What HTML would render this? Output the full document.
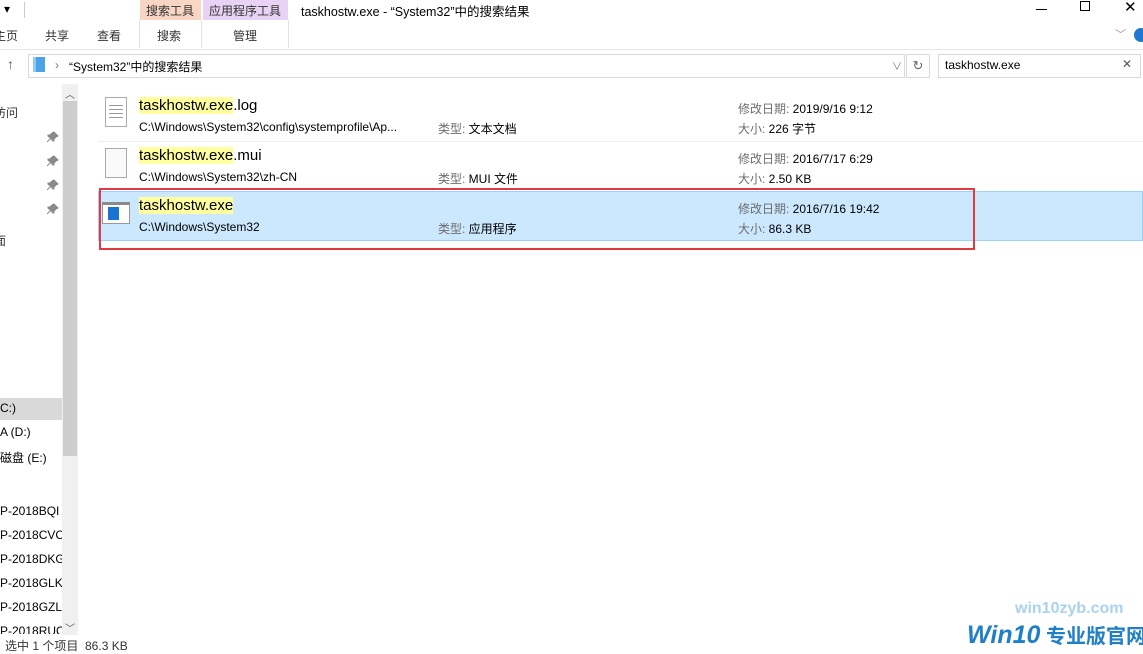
<!DOCTYPE html>
<html><head><meta charset="utf-8"><style>
*{margin:0;padding:0;box-sizing:border-box}
body{width:1143px;height:650px;background:#fff;font-family:"Liberation Sans","Noto Sans CJK SC",sans-serif;font-size:12px;color:#000;position:relative;overflow:hidden}
.a{position:absolute;white-space:nowrap}
.hl{background:#ffff9f;}
.g{color:#6d6d6d}
.pin{position:absolute;left:47px;width:12px;height:12px}
</style></head><body>
<!-- title bar -->
<div class="a" style="left:4px;top:2px;font-size:12px">▾</div>
<div class="a" style="left:24px;top:2px;width:1px;height:16px;background:#ccc"></div>
<div class="a" style="left:140px;top:0;width:61px;height:20px;background:#f9d6c3"></div>
<div class="a" style="left:146px;top:2px;color:#333">搜索工具</div>
<div class="a" style="left:203px;top:0;width:85px;height:20px;background:#e9d3f5"></div>
<div class="a" style="left:209px;top:2px;color:#333">应用程序工具</div>
<div class="a" style="left:301px;top:1px;font-size:12.5px">taskhostw.exe - “System32”中的搜索结果</div>
<div class="a" style="left:1036px;top:9px;width:11px;height:1px;background:#000"></div>
<div class="a" style="left:1080px;top:1px;width:10px;height:10px;border:1px solid #000"></div>
<div class="a" style="left:1124px;top:-2px;font-size:15px">✕</div>
<!-- tabs -->
<div class="a" style="left:-6px;top:27px;color:#333">主页</div>
<div class="a" style="left:45px;top:27px;color:#333">共享</div>
<div class="a" style="left:97px;top:27px;color:#333">查看</div>
<div class="a" style="left:139px;top:20px;width:1px;height:28px;background:#e2e2e2"></div>
<div class="a" style="left:201px;top:20px;width:1px;height:28px;background:#e2e2e2"></div>
<div class="a" style="left:288px;top:20px;width:1px;height:28px;background:#e2e2e2"></div>
<div class="a" style="left:157px;top:27px;color:#333">搜索</div>
<div class="a" style="left:233px;top:27px;color:#333">管理</div>
<div class="a" style="left:1115px;top:26px;color:#999;font-size:11px">﹀</div>
<div class="a" style="left:1134px;top:28px;width:14px;height:14px;border-radius:50%;background:#1e78d2"></div>
<div class="a" style="left:0;top:49px;width:1143px;height:1px;background:#e6e6e6"></div>
<!-- address -->
<div class="a" style="left:7px;top:56px;font-size:14px;color:#555">↑</div>
<div class="a" style="left:28px;top:54px;width:877px;height:24px;border:1px solid #d9d9d9"></div>
<div class="a" style="left:33px;top:57px;width:12px;height:15px;background:#4aa3e6;border-left:3px solid #8fcaf5"></div>
<div class="a" style="left:55px;top:58px;color:#777">›</div>
<div class="a" style="left:69px;top:58px">“System32”中的搜索结果</div>
<div class="a" style="left:892px;top:58px;color:#777;font-size:10px">∨</div>
<div class="a" style="left:906px;top:54px;width:24px;height:24px;border:1px solid #d9d9d9;text-align:center;color:#666;line-height:22px;font-size:13px">↻</div>
<div class="a" style="left:938px;top:54px;width:203px;height:24px;border:1px solid #d9d9d9"></div>
<div class="a" style="left:945px;top:58px">taskhostw.exe</div>
<div class="a" style="left:1122px;top:57px;color:#555;font-size:12px">✕</div>
<!-- nav -->
<div class="a" style="left:-6px;top:104px;color:#333">访问</div>
<svg class="pin" style="top:131px" viewBox="0 0 12 12"><path d="M7 1l4 4-2 1-2 2 0 2-1 0-5-5 0-1 2 0 2-2z M3 8L0 11" fill="#8a8a8a" stroke="#8a8a8a"/></svg>
<svg class="pin" style="top:155px" viewBox="0 0 12 12"><path d="M7 1l4 4-2 1-2 2 0 2-1 0-5-5 0-1 2 0 2-2z M3 8L0 11" fill="#8a8a8a" stroke="#8a8a8a"/></svg>
<svg class="pin" style="top:179px" viewBox="0 0 12 12"><path d="M7 1l4 4-2 1-2 2 0 2-1 0-5-5 0-1 2 0 2-2z M3 8L0 11" fill="#8a8a8a" stroke="#8a8a8a"/></svg>
<svg class="pin" style="top:203px" viewBox="0 0 12 12"><path d="M7 1l4 4-2 1-2 2 0 2-1 0-5-5 0-1 2 0 2-2z M3 8L0 11" fill="#8a8a8a" stroke="#8a8a8a"/></svg>
<div class="a" style="left:-6px;top:232px;color:#333">面</div>
<div class="a" style="left:0;top:398px;width:62px;height:22px;background:#d9d9d9"></div>
<div class="a" style="left:0;top:401px">C:)</div>
<div class="a" style="left:0;top:425px">A (D:)</div>
<div class="a" style="left:0;top:449px">磁盘 (E:)</div>
<div class="a" style="left:0;top:504px">P-2018BQI</div>
<div class="a" style="left:0;top:528px">P-2018CVC</div>
<div class="a" style="left:0;top:552px">P-2018DKG</div>
<div class="a" style="left:0;top:576px">P-2018GLK</div>
<div class="a" style="left:0;top:600px">P-2018GZL</div>
<div class="a" style="left:0;top:624px;height:10px;overflow:hidden">P-2018RUC</div>
<div class="a" style="left:62px;top:84px;width:16px;height:551px;background:#f0f0f0"></div>
<div class="a" style="left:63px;top:101px;width:14px;height:355px;background:#cdcdcd"></div>
<div class="a" style="left:65px;top:86px;font-size:10px;color:#555">︿</div>
<div class="a" style="left:65px;top:620px;font-size:10px;color:#555">﹀</div>
<!-- rows -->
<div class="a" style="left:98px;top:141px;width:1045px;height:1px;background:#eee"></div>
<div class="a" style="left:98px;top:191px;width:1045px;height:50px;background:#cce8ff;border:1px solid #99d1ff"></div>
<div class="a" style="left:99px;top:188px;width:876px;height:62px;border:2px solid #e03a3e"></div>

<div class="a" style="left:105px;top:97px;width:22px;height:30px;background:#fff;border:1px solid #aaa;background-image:repeating-linear-gradient(#fff 0 3px,#999 3px 4px);background-clip:content-box;padding:5px 3px"></div>
<div class="a" style="left:139px;top:97px;font-size:15px"><span class="hl">taskhostw.exe</span>.log</div>
<div class="a" style="left:139px;top:120px">C:\Windows\System32\config\systemprofile\Ap...</div>
<div class="a" style="left:438px;top:120px"><span class="g">类型:</span> 文本文档</div>
<div class="a" style="left:738px;top:100px"><span class="g">修改日期:</span> 2019/9/16 9:12</div>
<div class="a" style="left:738px;top:120px"><span class="g">大小:</span> 226 字节</div>

<div class="a" style="left:105px;top:148px;width:22px;height:30px;background:#fafafa;border:1px solid #aaa"></div>
<div class="a" style="left:139px;top:147px;font-size:15px"><span class="hl">taskhostw.exe</span>.mui</div>
<div class="a" style="left:139px;top:170px">C:\Windows\System32\zh-CN</div>
<div class="a" style="left:438px;top:170px"><span class="g">类型:</span> MUI 文件</div>
<div class="a" style="left:738px;top:150px"><span class="g">修改日期:</span> 2016/7/17 6:29</div>
<div class="a" style="left:738px;top:170px"><span class="g">大小:</span> 2.50 KB</div>

<div class="a" style="left:102px;top:202px;width:28px;height:22px;background:#fff;border:1px solid #999;border-top:3px solid #8a8a8a"></div>
<div class="a" style="left:108px;top:207px;width:11px;height:13px;background:#1a73d0"></div>
<div class="a" style="left:139px;top:197px;font-size:15px"><span class="hl">taskhostw.exe</span></div>
<div class="a" style="left:139px;top:220px">C:\Windows\System32</div>
<div class="a" style="left:438px;top:220px"><span class="g">类型:</span> 应用程序</div>
<div class="a" style="left:738px;top:200px"><span class="g">修改日期:</span> 2016/7/16 19:42</div>
<div class="a" style="left:738px;top:220px"><span class="g">大小:</span> 86.3 KB</div>
<!-- status -->
<div class="a" style="left:5px;top:637px;color:#333">选中 1 个项目&nbsp;&nbsp;86.3 KB</div>
<div class="a" style="left:1015px;top:600px;font-size:16px;font-weight:bold;color:#a9d3ec">win10zyb.com</div>
<div class="a" style="left:967px;top:620px;font-size:25px;font-weight:bold;font-style:italic;color:#1f7fc8;line-height:30px">Win10<span style="font-size:20px;font-style:normal"> 专业版官网</span></div>
</body></html>
